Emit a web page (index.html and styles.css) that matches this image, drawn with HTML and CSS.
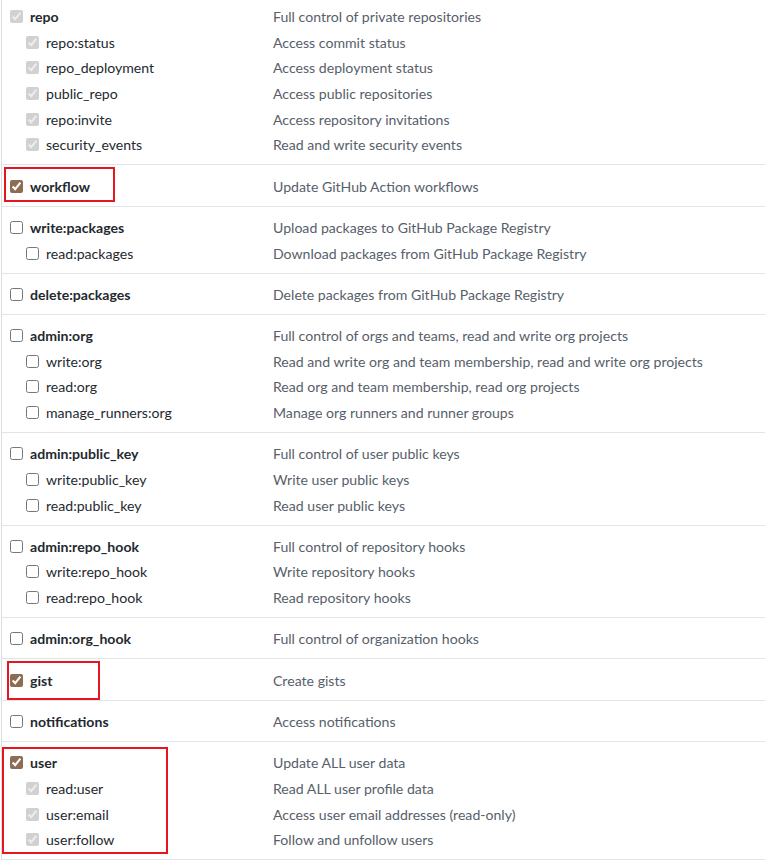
FILE: index.html
```html
<!DOCTYPE html>
<html lang="en">
<head>
<meta charset="utf-8">
<title>Scopes</title>
<link rel="stylesheet" href="styles.css">
</head>
<body>
<div class="scopes">
  <div class="group">
    <div class="row parent"><label class="name"><input type="checkbox" checked disabled>repo</label><span class="desc">Full control of private repositories</span></div>
    <div class="row child"><label class="name"><input type="checkbox" checked disabled>repo:status</label><span class="desc">Access commit status</span></div>
    <div class="row child"><label class="name"><input type="checkbox" checked disabled>repo_deployment</label><span class="desc">Access deployment status</span></div>
    <div class="row child"><label class="name"><input type="checkbox" checked disabled>public_repo</label><span class="desc">Access public repositories</span></div>
    <div class="row child"><label class="name"><input type="checkbox" checked disabled>repo:invite</label><span class="desc">Access repository invitations</span></div>
    <div class="row child"><label class="name"><input type="checkbox" checked disabled>security_events</label><span class="desc">Read and write security events</span></div>
  </div>
  <div class="group">
    <span class="mark mark-workflow"></span>
    <div class="row parent"><label class="name"><input type="checkbox" checked>workflow</label><span class="desc">Update GitHub Action workflows</span></div>
  </div>
  <div class="group">
    <div class="row parent"><label class="name"><input type="checkbox">write:packages</label><span class="desc">Upload packages to GitHub Package Registry</span></div>
    <div class="row child"><label class="name"><input type="checkbox">read:packages</label><span class="desc">Download packages from GitHub Package Registry</span></div>
  </div>
  <div class="group">
    <div class="row parent"><label class="name"><input type="checkbox">delete:packages</label><span class="desc">Delete packages from GitHub Package Registry</span></div>
  </div>
  <div class="group">
    <div class="row parent"><label class="name"><input type="checkbox">admin:org</label><span class="desc">Full control of orgs and teams, read and write org projects</span></div>
    <div class="row child"><label class="name"><input type="checkbox">write:org</label><span class="desc">Read and write org and team membership, read and write org projects</span></div>
    <div class="row child"><label class="name"><input type="checkbox">read:org</label><span class="desc">Read org and team membership, read org projects</span></div>
    <div class="row child"><label class="name"><input type="checkbox">manage_runners:org</label><span class="desc">Manage org runners and runner groups</span></div>
  </div>
  <div class="group">
    <div class="row parent"><label class="name"><input type="checkbox">admin:public_key</label><span class="desc">Full control of user public keys</span></div>
    <div class="row child"><label class="name"><input type="checkbox">write:public_key</label><span class="desc">Write user public keys</span></div>
    <div class="row child"><label class="name"><input type="checkbox">read:public_key</label><span class="desc">Read user public keys</span></div>
  </div>
  <div class="group">
    <div class="row parent"><label class="name"><input type="checkbox">admin:repo_hook</label><span class="desc">Full control of repository hooks</span></div>
    <div class="row child"><label class="name"><input type="checkbox">write:repo_hook</label><span class="desc">Write repository hooks</span></div>
    <div class="row child"><label class="name"><input type="checkbox">read:repo_hook</label><span class="desc">Read repository hooks</span></div>
  </div>
  <div class="group">
    <div class="row parent"><label class="name"><input type="checkbox">admin:org_hook</label><span class="desc">Full control of organization hooks</span></div>
  </div>
  <div class="group">
    <span class="mark mark-gist"></span>
    <div class="row parent"><label class="name"><input type="checkbox" checked>gist</label><span class="desc">Create gists</span></div>
  </div>
  <div class="group">
    <div class="row parent"><label class="name"><input type="checkbox">notifications</label><span class="desc">Access notifications</span></div>
  </div>
  <div class="group">
    <span class="mark mark-user"></span>
    <div class="row parent"><label class="name"><input type="checkbox" checked>user</label><span class="desc">Update ALL user data</span></div>
    <div class="row child"><label class="name"><input type="checkbox" checked disabled>read:user</label><span class="desc">Read ALL user profile data</span></div>
    <div class="row child"><label class="name"><input type="checkbox" checked disabled>user:email</label><span class="desc">Access user email addresses (read-only)</span></div>
    <div class="row child"><label class="name"><input type="checkbox" checked disabled>user:follow</label><span class="desc">Follow and unfollow users</span></div>
  </div>
</div>
</body>
</html>
```
FILE: styles.css
```css
html, body {
  margin: 0;
  padding: 0;
  background: #ffffff;
}

body {
  font-family: Lato, "Noto Sans", "Liberation Sans", sans-serif;
  font-size: 14.1px;
  color: #24292f;
  overflow: hidden;
}

.scopes {
  margin-left: 1px;
  margin-top: -4px;
  border-left: 1px solid #d8dee4;
}

.group {
  position: relative;
  padding: 8px 0 6.75px;
  border-bottom: 1px solid #e1e5ea;
}

.row {
  display: grid;
  grid-template-columns: 271px 1fr;
  align-items: center;
  height: 25.6px;
}

.name {
  display: flex;
  align-items: center;
  white-space: nowrap;
}

.parent .name {
  padding-left: 8px;
  font-weight: 700;
}

.child .name {
  padding-left: 24px;
}

.name input {
  width: 13px;
  height: 13px;
  margin: 0 7px 0 0;
  accent-color: #8c6d54;
}

.desc {
  color: #57606a;
  white-space: nowrap;
}

.mark {
  position: absolute;
  border: 2px solid #e5161f;
  pointer-events: none;
}

.mark-workflow {
  left: 2px;
  top: 2px;
  width: 107px;
  height: 31px;
}

.mark-gist {
  left: 5px;
  top: 2px;
  width: 89px;
  height: 35px;
}

.mark-user {
  left: 0;
  top: 5px;
  width: 162px;
  height: 103px;
}
```
